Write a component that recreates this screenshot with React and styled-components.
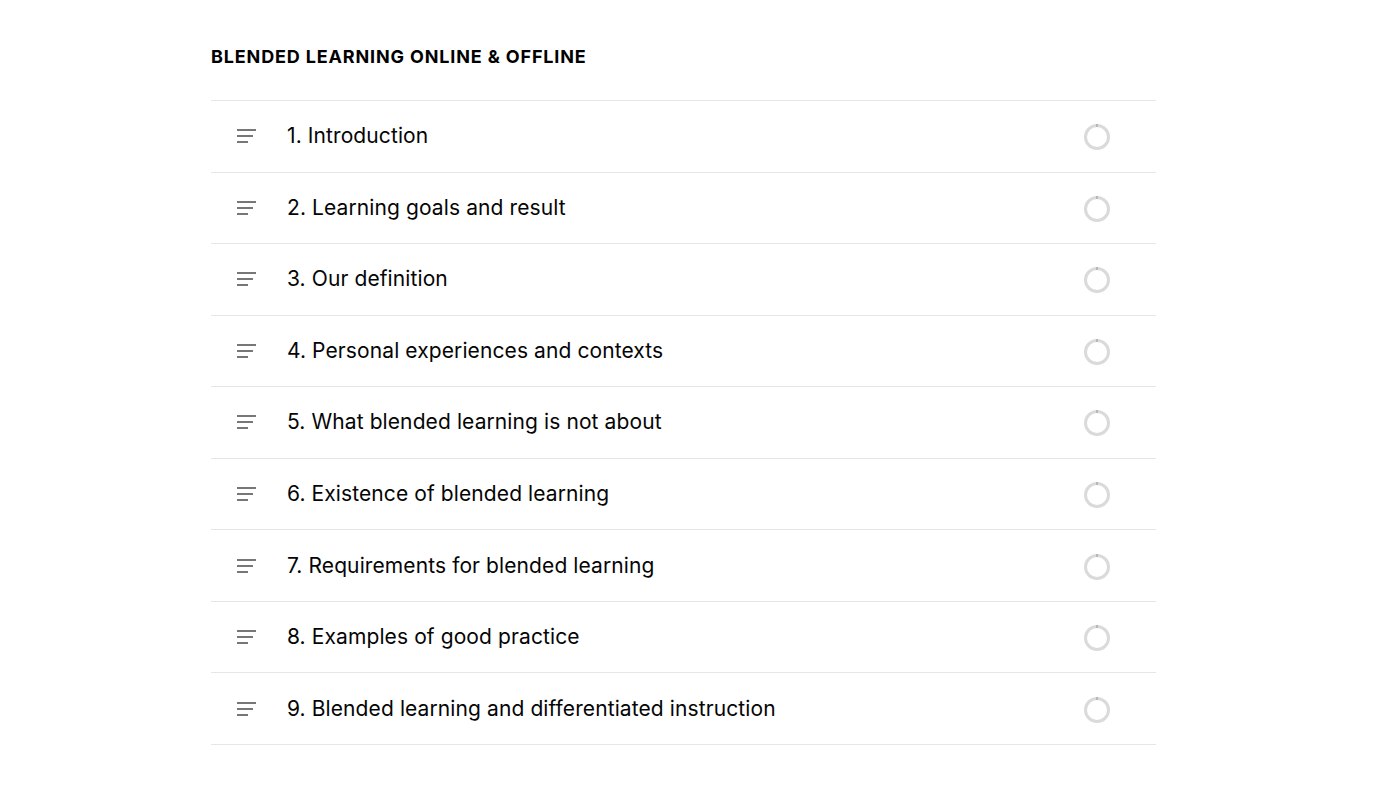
import React from 'react'
import styled, { createGlobalStyle } from 'styled-components'

const GlobalStyle = createGlobalStyle`
  html, body {
    margin: 0;
    padding: 0;
    background: #fff;
  }
  body {
    font-family: Inter, "Noto Sans", sans-serif;
    color: #111;
    -webkit-font-smoothing: antialiased;
  }
`

const Page = styled.div`
  padding: 46px 0 40px 211px;
`

const Section = styled.section`
  width: 945px;
`

const Title = styled.h2`
  margin: 0 0 32px 0;
  font-size: 18px;
  line-height: 22px;
  font-weight: 700;
  letter-spacing: 0.85px;
  text-transform: uppercase;
  color: #000;
`

const List = styled.ul`
  list-style: none;
  margin: 0;
  padding: 0;
  border-top: 1px solid #e6e6e6;
`

const Row = styled.li`
  display: flex;
  align-items: center;
  height: 71.56px;
  box-sizing: border-box;
  padding: 0 45px 0 26px;
  border-bottom: 1px solid #e6e6e6;
`

const Label = styled.span`
  flex: 1;
  margin-left: 31px;
  font-size: 21px;
  line-height: 28px;
  letter-spacing: 0.1px;
  color: #050505;
`

const Handle = () => (
  <svg width="19" height="14" viewBox="0 0 19 14" aria-hidden="true">
    <rect x="0" y="0" width="19" height="2" fill="#777" />
    <rect x="0" y="6" width="16" height="2" fill="#777" />
    <rect x="0" y="12" width="11" height="2" fill="#777" />
  </svg>
)

const Progress = () => (
  <svg width="28" height="28" viewBox="0 0 28 28" aria-hidden="true" style={{ marginTop: 2 }}>
    <circle cx="14" cy="14" r="11.5" fill="none" stroke="#dadada" strokeWidth="3" />
    <rect x="13.5" y="1" width="1" height="3" fill="#8a96a6" />
  </svg>
)

const lessons = [
  '1. Introduction',
  '2. Learning goals and result',
  '3. Our definition',
  '4. Personal experiences and contexts',
  '5. What blended learning is not about',
  '6. Existence of blended learning',
  '7. Requirements for blended learning',
  '8. Examples of good practice',
  '9. Blended learning and differentiated instruction',
]

export default function App() {
  return (
    <Page>
      <GlobalStyle />
      <Section>
        <Title>Blended learning online &amp; offline</Title>
        <List>
          {lessons.map(title => (
            <Row key={title}>
              <Handle />
              <Label>{title}</Label>
              <Progress />
            </Row>
          ))}
        </List>
      </Section>
    </Page>
  )
}
